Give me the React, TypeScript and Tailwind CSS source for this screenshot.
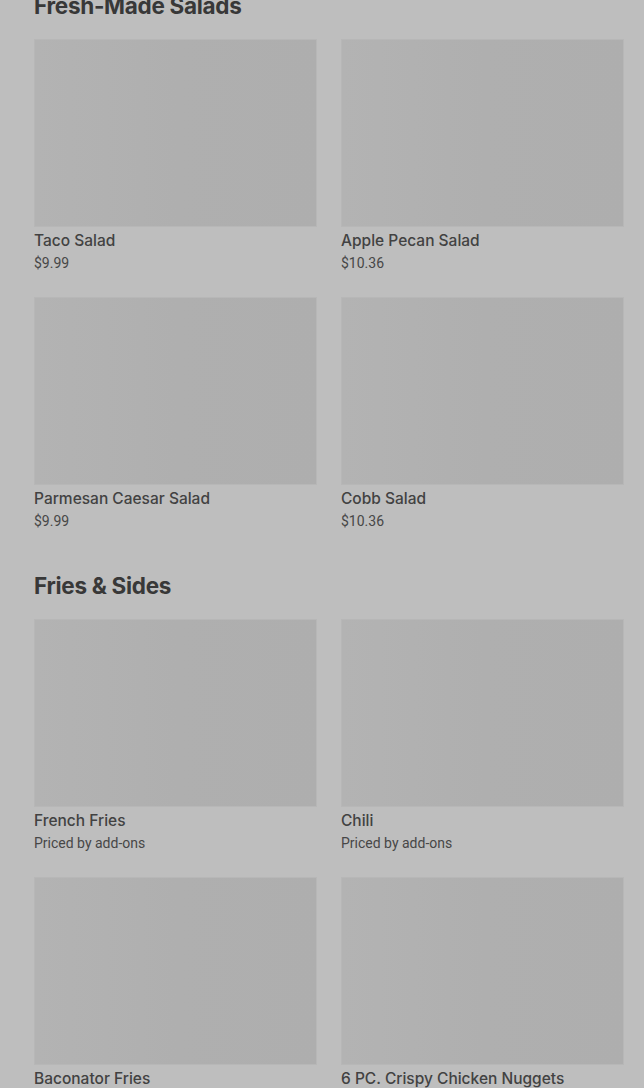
import React from "react";

type Item = { name: string; price: string };

const sections: { title: string; items: Item[] }[] = [
  {
    title: "Fresh-Made Salads",
    items: [
      { name: "Taco Salad", price: "$9.99" },
      { name: "Apple Pecan Salad", price: "$10.36" },
      { name: "Parmesan Caesar Salad", price: "$9.99" },
      { name: "Cobb Salad", price: "$10.36" },
    ],
  },
  {
    title: "Fries & Sides",
    items: [
      { name: "French Fries", price: "Priced by add-ons" },
      { name: "Chili", price: "Priced by add-ons" },
      { name: "Baconator Fries", price: "Priced by add-ons" },
      { name: "6 PC. Crispy Chicken Nuggets", price: "Priced by add-ons" },
    ],
  },
];

function MenuCard({ item }: { item: Item }) {
  return (
    <div className="flex flex-col">
      <div className="h-[188px] w-full border border-[#b7b7b7] bg-gradient-to-r from-[#b3b3b3] via-[#afafaf] to-[#aeaeae]" />
      <p className="mt-[2px] text-[15.5px] leading-6 font-medium text-[#424242] [font-family:Inter,sans-serif]">
        {item.name}
      </p>
      <p className="text-[14px] leading-5 text-[#474747] [font-family:Roboto,sans-serif]">{item.price}</p>
    </div>
  );
}

export default function App() {
  return (
    <div className="h-[1088px] overflow-hidden bg-[#bebebe] pl-[34px] pr-[20px]">
      <div className="-mt-[10px] flex flex-col gap-[39px]">
        {sections.map((section) => (
          <section key={section.title}>
            <h2 className="mb-[17px] text-[22.5px] leading-8 font-bold tracking-[-0.3px] text-[#383838] [font-family:Inter,sans-serif]">
              {section.title}
            </h2>
            <div className="grid grid-cols-2 gap-x-6 gap-y-6">
              {section.items.map((item) => (
                <MenuCard key={item.name} item={item} />
              ))}
            </div>
          </section>
        ))}
      </div>
    </div>
  );
}
